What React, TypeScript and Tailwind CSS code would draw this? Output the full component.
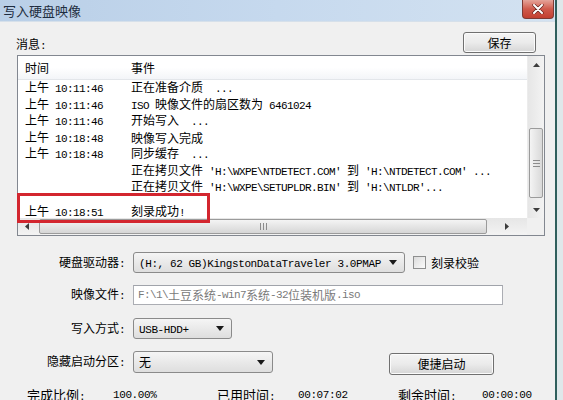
import React from "react";

const cjk = "font-['Noto_Sans_CJK_SC',sans-serif]";

// CJK glyphs stay 12px wide, ascii runs get a narrow mono font (half width)
function Mix({ text, small }: { text: string; small?: boolean }) {
  const parts = text.split(/([\x00-\x7f]+)/).filter(Boolean);
  return (
    <>
      {parts.map((p, i) =>
        /^[\x00-\x7f]+$/.test(p) ? (
          <span
            key={i}
            className={
              small
                ? "font-['Liberation_Mono',monospace] text-[11px] tracking-[-0.6px] whitespace-pre"
                : "font-['Liberation_Mono',monospace] text-[11px] tracking-[-0.4px] whitespace-pre"
            }
          >
            {p}
          </span>
        ) : (
          <span key={i}>{p}</span>
        )
      )}
    </>
  );
}

const rows = [
  ["上午 10:11:46", "正在准备介质  ..."],
  ["上午 10:11:46", "ISO 映像文件的扇区数为 6461024"],
  ["上午 10:11:46", "开始写入  ..."],
  ["上午 10:18:48", "映像写入完成"],
  ["上午 10:18:48", "同步缓存  ..."],
  ["", "正在拷贝文件 'H:\\WXPE\\NTDETECT.COM' 到 'H:\\NTDETECT.COM' ..."],
  ["", "正在拷贝文件 'H:\\WXPE\\SETUPLDR.BIN' 到 'H:\\NTLDR'..."],
];

function Arrow({ dir }: { dir: "up" | "down" | "left" | "right" }) {
  const pts = {
    up: "0,4 3.5,0 7,4",
    down: "0,0 7,0 3.5,4",
    left: "4,0 4,7 0,3.5",
    right: "0,0 0,7 4,3.5",
  }[dir];
  const w = dir === "up" || dir === "down" ? 7 : 4;
  const h = dir === "up" || dir === "down" ? 4 : 7;
  return (
    <svg width={w} height={h} viewBox={`0 0 ${w} ${h}`}>
      <polygon points={pts} fill="#3c3c3c" />
    </svg>
  );
}

function Combo({ w, text }: { w: string; text: string }) {
  return (
    <div
      className={`${w} h-full flex items-center justify-between pl-[5px] pr-[7px] rounded-[3px] border border-[#8a8a8a] bg-gradient-to-b from-[#f5f5f5] to-[#dedede] text-[12px] text-black`}
    >
      <span className="leading-none whitespace-pre">
        <Mix text={text} />
      </span>
      <svg width="8" height="5" viewBox="0 0 8 5">
        <polygon points="0,0 8,0 4,5" fill="#1a1a1a" />
      </svg>
    </div>
  );
}

function Btn({ w, h, label }: { w: string; h: string; label: string }) {
  return (
    <div
      className={`${w} ${h} flex items-center justify-center rounded-[3px] border border-[#707070] bg-gradient-to-b from-[#f4f4f4] via-[#ebebeb] to-[#d6d6d6] text-[12px] text-black shadow-[inset_0_0_0_1px_#fbfbfb]`}
    >
      {label}
    </div>
  );
}

export default function App() {
  return (
    <div className={`w-[563px] h-[400px] overflow-hidden flex bg-[#f0f0f0] ${cjk}`}>
      <div className="w-[555px] flex flex-col shrink-0">
        {/* title bar */}
        <div className="h-[22px] flex items-start justify-between bg-gradient-to-r from-[#b9cfe7] via-[#c6d9ee] to-[#d3e2f1] border-b border-[#d6e0ea]">
          <span className="pl-[3px] text-[13px] leading-[22px] text-[#1e2d40]">写入硬盘映像</span>
          <div className="w-[32px] h-[19px] mr-[1px] flex items-center justify-center rounded-b-[4px] border border-t-0 border-[#7d3a33] bg-gradient-to-b from-[#e4a399] via-[#cf5a4c] to-[#c23f30]">
            <svg width="12" height="10" viewBox="0 0 12 10">
              <path d="M2 1 L10 9 M10 1 L2 9" stroke="#5a1d18" strokeWidth="3.2" strokeLinecap="round" />
              <path d="M2 1 L10 9 M10 1 L2 9" stroke="#ffffff" strokeWidth="2" strokeLinecap="round" />
            </svg>
          </div>
        </div>

        <div className="pl-[17px] pr-[10px] flex flex-col">
          {/* message label + save */}
          <div className="mt-[10px] h-[21px] flex items-center justify-between">
            <span className="text-[12px] leading-none text-black mt-[5px] -ml-[1px]">
              消息<Mix text=":" small />
            </span>
            <div className="mr-[9px]">
              <Btn w="w-[73px]" h="h-[21px]" label="保存" />
            </div>
          </div>

          {/* list view */}
          <div className="mt-[2px] h-[181px] border border-[#828790] bg-white relative flex flex-col">
            <div className="flex flex-1 min-h-0">
              <div className="flex-1 flex flex-col overflow-hidden">
                <div className="h-[24px] shrink-0 flex items-center border-b border-[#e3e6ea] bg-gradient-to-b from-white via-white to-[#f3f5f8] text-[12px] text-black">
                  <span className="w-[113px] pl-[7px]">时间</span>
                  <span>事件</span>
                </div>
                {rows.map((r, i) => (
                  <div key={i} className="h-[16.5px] shrink-0 flex items-center text-[12px] text-black leading-none whitespace-nowrap">
                    <span className="w-[113px] shrink-0 pl-[7px]">
                      <Mix text={r[0]} small />
                    </span>
                    <span>
                      <Mix text={r[1]} small />
                    </span>
                  </div>
                ))}
                <div className="mt-[8px] h-[16.5px] shrink-0 flex items-center text-[12px] text-black leading-none">
                  <span className="w-[113px] shrink-0 pl-[7px]">
                    <Mix text="上午 10:18:51" small />
                  </span>
                  <span>
                    <Mix text="刻录成功!" small />
                  </span>
                </div>
              </div>
              {/* vertical scrollbar */}
              <div className="w-[17px] shrink-0 flex flex-col items-center bg-gradient-to-r from-[#e6e6e6] to-[#f3f3f3] border-l border-[#ececec]">
                <div className="h-[17px] flex items-center justify-center">
                  <Arrow dir="up" />
                </div>
                <div className="flex-1 w-full relative">
                  <div className="absolute left-[1px] right-[1px] top-[55px] h-[70px] rounded-[2px] border border-[#9b9b9b] bg-gradient-to-r from-[#f4f4f4] to-[#d9d9d9] flex flex-col items-center justify-center gap-[2px]">
                    <div className="w-[7px] h-px bg-[#8c8c8c]" />
                    <div className="w-[7px] h-px bg-[#8c8c8c]" />
                    <div className="w-[7px] h-px bg-[#8c8c8c]" />
                  </div>
                </div>
                <div className="h-[17px] flex items-center justify-center">
                  <Arrow dir="down" />
                </div>
              </div>
            </div>
            {/* horizontal scrollbar */}
            <div className="h-[17px] shrink-0 flex">
              <div className="flex-1 flex items-center bg-gradient-to-b from-[#e6e6e6] to-[#f3f3f3]">
                <div className="w-[17px] flex justify-center">
                  <Arrow dir="left" />
                </div>
                <div className="ml-[4px] w-[448px] h-[15px] rounded-[2px] border border-[#9b9b9b] bg-gradient-to-b from-[#f4f4f4] to-[#d6d6d6] flex items-center justify-center gap-[2px]">
                  <div className="w-px h-[7px] bg-[#8c8c8c]" />
                  <div className="w-px h-[7px] bg-[#8c8c8c]" />
                  <div className="w-px h-[7px] bg-[#8c8c8c]" />
                </div>
                <div className="flex-1 flex justify-center">
                  <Arrow dir="right" />
                </div>
              </div>
              <div className="w-[17px] bg-[#f0f0f0]" />
            </div>
            {/* highlight annotation */}
            <div className="absolute left-[-1px] top-[137px] w-[193px] h-[30px] border-[3px] border-[#d3262f]" />
          </div>

          {/* form */}
          <div className="mt-[16px] h-[21px] flex items-center text-[12px] text-black">
            <span className="w-[108px] text-right leading-none">
              硬盘驱动器<Mix text=":" small />
            </span>
            <div className="ml-[8px] h-full">
              <Combo w="w-[272px]" text="(H:, 62 GB)KingstonDataTraveler 3.0PMAP" />
            </div>
            <div className="ml-[8px] w-[13px] h-[13px] border border-[#8e8f8f] bg-gradient-to-br from-[#dcdcdc] to-[#fbfbfb]" />
            <span className="ml-[5px] leading-none">刻录校验</span>
          </div>

          <div className="mt-[12px] h-[20px] flex items-center text-[12px]">
            <span className="w-[108px] text-right leading-none text-black">
              映像文件<Mix text=":" small />
            </span>
            <div className="ml-[8px] w-[370px] h-full flex items-center pl-[4px] border border-[#abadb3] border-t-[#a0a3aa] bg-white text-[#7a7a7a] leading-none whitespace-nowrap">
              <Mix text="F:\1\土豆系统-win7系统-32位装机版.iso" small />
            </div>
          </div>

          <div className="mt-[13px] h-[21px] flex items-center text-[12px] text-black">
            <span className="w-[108px] text-right leading-none">
              写入方式<Mix text=":" small />
            </span>
            <div className="ml-[8px] h-full">
              <Combo w="w-[99px]" text="USB-HDD+" />
            </div>
          </div>

          <div className="mt-[12px] h-[22px] flex items-center text-[12px] text-black">
            <span className="w-[108px] text-right leading-none">
              隐藏启动分区<Mix text=":" small />
            </span>
            <div className="ml-[8px] h-full">
              <Combo w="w-[140px]" text="无" />
            </div>
            <div className="ml-[116px] mt-[3px]">
              <Btn w="w-[105px]" h="h-[22px]" label="便捷启动" />
            </div>
          </div>

          <div className="mt-[13px] ml-[10px] h-[18px] flex items-center text-[13px] text-black leading-none">
            <span className="w-[86px]">
              完成比例<Mix text=":" />
            </span>
            <span className="w-[104px] font-['Liberation_Mono',monospace] text-[11px] tracking-[-0.4px]">100.00%</span>
            <span className="w-[81px]">
              已用时间<Mix text=":" />
            </span>
            <span className="w-[100px] font-['Liberation_Mono',monospace] text-[11px] tracking-[-0.4px]">00:07:02</span>
            <span className="w-[84px]">
              剩余时间<Mix text=":" />
            </span>
            <span className="font-['Liberation_Mono',monospace] text-[11px] tracking-[-0.4px]">00:00:00</span>
          </div>
        </div>
      </div>
      <div className="w-[2px] shrink-0 bg-[#2f5f5d]" />
      <div className="flex-1 bg-[#dfe8ea]" />
    </div>
  );
}
